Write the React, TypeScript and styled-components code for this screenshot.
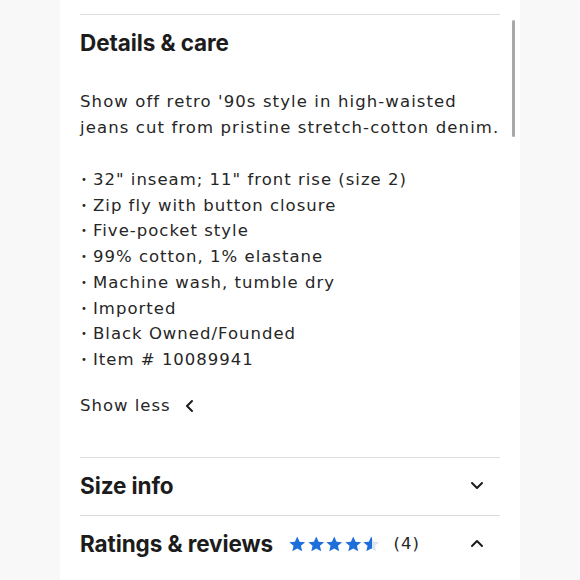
import React from "react";
import styled, { createGlobalStyle } from "styled-components";

const COLORS = {
  INK: "#1c1c1c",
  TEXT: "#262626",
  LINE: "#dcdcdc",
  SIDE: "#f8f8f8",
  STAR: "#1f6fdb",
  STAR_OFF: "#dde4ec",
};

const GlobalStyle = createGlobalStyle`
  body {
    margin: 0;
    background: ${COLORS.SIDE};
    font-family: "DejaVu Sans", "Liberation Sans", sans-serif;
    color: ${COLORS.TEXT};
  }
`;

const Page = styled.div`
  display: flex;
  justify-content: center;
  height: 580px;
  overflow: hidden;
  background: ${COLORS.SIDE};
`;

const Panel = styled.div`
  position: relative;
  width: 420px;
  padding: 14px 20px 0 20px;
  background: #fff;
`;

const Divider = styled.hr`
  margin: 0;
  border: 0;
  height: 1px;
  background: ${COLORS.LINE};
`;

const Scrollbar = styled.div`
  position: absolute;
  top: 20px;
  right: 5px;
  width: 3px;
  height: 117px;
  border-radius: 2px;
  background: #a9a9a9;
`;

const Heading = styled.h3`
  margin: 0;
  font-family: "Inter", "Liberation Sans", sans-serif;
  font-size: 22.5px;
  line-height: 28px;
  font-weight: 700;
  letter-spacing: -0.1px;
  color: ${COLORS.INK};
`;

const Section = styled.div`
  padding-top: 14px;
`;

const Body = styled.p`
  margin: 32px 0 0;
  font-size: 16.5px;
  line-height: 26px;
  letter-spacing: 1.1px;
  white-space: nowrap;
`;

const List = styled.ul`
  margin: 26px 0 0;
  padding: 0;
  list-style: none;
`;

const Item = styled.li`
  font-size: 16.5px;
  line-height: 25.7px;
  letter-spacing: 1px;
  &::before {
    content: "•";
    display: inline-block;
    width: 12px;
    padding-left: 1px;
    font-size: 10px;
    vertical-align: 2px;
  }
`;

const ShowLess = styled.button`
  display: flex;
  align-items: center;
  gap: 12px;
  margin: 20px 0 38px;
  padding: 0;
  border: 0;
  background: none;
  font: inherit;
  font-size: 16.5px;
  line-height: 26px;
  letter-spacing: 1px;
  color: ${COLORS.TEXT};
  cursor: pointer;
`;

const Row = styled.div`
  display: flex;
  align-items: center;
  height: 57px;
  padding-right: 16px;
`;

const RowTitle = styled(Heading)`
  flex: 1;
  display: flex;
  align-items: center;
  white-space: nowrap;
`;

const Stars = styled.span`
  display: inline-flex;
  margin-left: 15px;
`;

const Count = styled.span`
  margin-left: 13px;
  font-family: "DejaVu Sans", sans-serif;
  font-size: 16.5px;
  font-weight: 400;
  letter-spacing: 1px;
  color: ${COLORS.TEXT};
`;

const Chevron = ({ dir }: { dir: "up" | "down" | "left" }) => {
  const pts = {
    up: "2,9 7,4 12,9",
    down: "2,4 7,9 12,4",
    left: "9,2 4,7 9,12",
  }[dir];
  return (
    <svg width="14" height="14" viewBox="0 0 14 14">
      <polyline
        points={pts}
        fill="none"
        stroke={COLORS.INK}
        strokeWidth="2"
        strokeLinecap="round"
        strokeLinejoin="round"
      />
    </svg>
  );
};

const STAR_D =
  "M9 1.2l2.3 5 5.4.5-4.1 3.6 1.2 5.3L9 12.8l-4.8 2.8 1.2-5.3L1.3 6.7l5.4-.5z";

const Star = ({ fill, id }: { fill: number; id: string }) => (
  <svg width="18.5" height="18" viewBox="0 0 18 17">
    <defs>
      <linearGradient id={id}>
        <stop offset={fill} stopColor={COLORS.STAR} />
        <stop offset={fill} stopColor={COLORS.STAR_OFF} />
      </linearGradient>
    </defs>
    <path d={STAR_D} fill={`url(#${id})`} />
  </svg>
);

const bullets = [
  '32" inseam; 11" front rise (size 2)',
  "Zip fly with button closure",
  "Five-pocket style",
  "99% cotton, 1% elastane",
  "Machine wash, tumble dry",
  "Imported",
  "Black Owned/Founded",
  "Item # 10089941",
];

const ratings = [1, 1, 1, 1, 0.55];

const App = () => (
  <>
    <GlobalStyle />
    <Page>
      <Panel>
        <Scrollbar />
        <Divider />
        <Section>
          <Heading>Details &amp; care</Heading>
          <Body>
            Show off retro '90s style in high-waisted
            <br />
            jeans cut from pristine stretch-cotton denim.
          </Body>
          <List>
            {bullets.map((b) => (
              <Item key={b}>{b}</Item>
            ))}
          </List>
          <ShowLess>
            Show less <Chevron dir="left" />
          </ShowLess>
        </Section>
        <Divider />
        <Row>
          <RowTitle>Size info</RowTitle>
          <Chevron dir="down" />
        </Row>
        <Divider />
        <Row>
          <RowTitle>
            Ratings &amp; reviews
            <Stars>
              {ratings.map((f, i) => (
                <Star key={i} fill={f} id={`s${i}`} />
              ))}
            </Stars>
            <Count>(4)</Count>
          </RowTitle>
          <Chevron dir="up" />
        </Row>
      </Panel>
    </Page>
  </>
);

export default App;
